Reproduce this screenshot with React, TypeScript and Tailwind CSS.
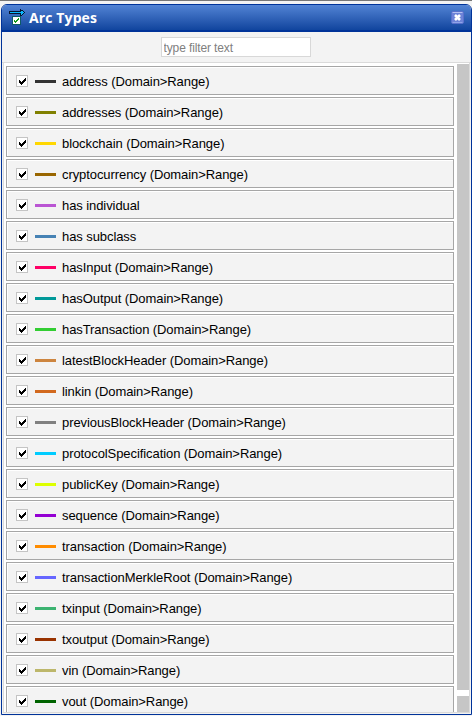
type ArcType = { name: string; color: string; relation: boolean };

const arcs: ArcType[] = [
  { name: 'address', color: '#333333', relation: true },
  { name: 'addresses', color: '#808000', relation: true },
  { name: 'blockchain', color: '#ffd700', relation: true },
  { name: 'cryptocurrency', color: '#996600', relation: true },
  { name: 'has individual', color: '#ba55d3', relation: false },
  { name: 'has subclass', color: '#4682b4', relation: false },
  { name: 'hasInput', color: '#ff0066', relation: true },
  { name: 'hasOutput', color: '#009999', relation: true },
  { name: 'hasTransaction', color: '#32cd32', relation: true },
  { name: 'latestBlockHeader', color: '#cd853f', relation: true },
  { name: 'linkin', color: '#d2691e', relation: true },
  { name: 'previousBlockHeader', color: '#808080', relation: true },
  { name: 'protocolSpecification', color: '#00ccff', relation: true },
  { name: 'publicKey', color: '#ddff00', relation: true },
  { name: 'sequence', color: '#9400d3', relation: true },
  { name: 'transaction', color: '#ff8c00', relation: true },
  { name: 'transactionMerkleRoot', color: '#6666ff', relation: true },
  { name: 'txinput', color: '#3cb371', relation: true },
  { name: 'txoutput', color: '#993300', relation: true },
  { name: 'vin', color: '#bdb76b', relation: true },
  { name: 'vout', color: '#006400', relation: true },
];

function Tick() {
  return (
    <svg className="h-[7px] w-[7px]" viewBox="0 0 7 7" shapeRendering="crispEdges" fill="#000">
      <path d="M0 2h1v3H0zM1 3h1v3H1zM2 4h1v3H2zM3 3h1v3H3zM4 2h1v3H4zM5 1h1v3H5zM6 0h1v3H6z" />
    </svg>
  );
}

function ArcIcon() {
  return (
    <svg className="h-[17px] w-[18px] shrink-0" viewBox="0 0 18 17" shapeRendering="crispEdges">
      <path d="M0 2h12v1H0zM0 3h1v1H0zM0 4h12v1H0zM11 0h1v1h-1zM12 1h1v1h-1zM13 1h1v1h-1zM14 2h1v1h-1zM15 3h1v1h-1zM14 4h1v1h-1zM13 5h1v1h-1zM12 6h1v1h-1zM11 6h1v1h-1zM11 1h1v1h-1zM11 5h1v1h-1z" fill="#05142e" />
      <path d="M1 3h14v1H1zM12 2h2v1h-2zM12 4h2v1h-2zM12 5h1v1h-1z" fill="#08b8ff" />
      <path d="M3 7h9v9H3z" fill="#0c5a66" />
      <path d="M4 8h7v7H4z" fill="#fff" />
      <path d="M5 11h1v2H5zM6 12h1v2H6zM7 11h1v2H7zM8 10h1v2H8zM9 9h1v2H9z" fill="#159a18" />
    </svg>
  );
}

function CloseIcon() {
  return (
    <svg className="h-[13px] w-[13px]" viewBox="0 0 13 13">
      <rect x=".5" y=".5" width="12" height="12" rx="1.5" fill="#6d83d8" stroke="#5a71cc" />
      <path d="M1.5 1.5h10" stroke="#b5c0f0" />
      <path d="M1.5 11.5h10" stroke="#8fa4e8" />
      <path d="M4 4l5 5M9 4l-5 5" stroke="#fff" strokeWidth="2.6" />
    </svg>
  );
}

function ArcRow({ arc }: { arc: ArcType }) {
  return (
    <li className="flex h-[29px] shrink-0 items-start border border-[#a6a6a6] bg-[#f3f3f3] pl-[9px] shadow-[inset_1px_1px_0_#fff]">
      <span className="mt-2 flex h-3 w-3 items-center justify-center border border-[#c4c4c4] bg-white">
        <Tick />
      </span>
      <span className="mt-[13px] ml-[7px] h-[3px] w-[21px]" style={{ backgroundColor: arc.color }} />
      <span className="mt-[7px] ml-1.5 text-[13px] leading-4 tracking-[-0.08px] whitespace-pre">
        {arc.name + (arc.relation ? ' (Domain>Range)' : '')}
      </span>
    </li>
  );
}

export default function App() {
  return (
    <div className="h-[716px] w-[472px] overflow-hidden border-t border-[#777] bg-[#f3f3f3] pt-[3px] pl-px font-['Liberation_Sans',Arial,sans-serif] text-black">
      <section className="flex h-[711px] w-[471px] flex-col overflow-hidden rounded-t-[6px] border border-[#003399] bg-[#f3f3f3] pb-px">
        <header className="flex h-[27px] shrink-0 items-center border-b-2 border-[#003399] bg-linear-to-b from-[#5283d4] to-[#10459e] px-[7px]">
          <ArcIcon />
          <h1 className="ml-[2px] flex-1 font-['Open_Sans',sans-serif] text-sm leading-5 font-bold tracking-[0.12px] text-white">
            Arc Types
          </h1>
          <CloseIcon />
        </header>
        <div className="flex h-[31px] shrink-0 justify-center border-b border-[#dadada] pt-[5px] pr-[2px]">
          <input
            className="h-5 w-[150px] border border-[#d8d8d8] bg-white px-[2px] pt-px text-xs tracking-[-0.12px] placeholder:text-[#808080]"
            placeholder="type filter text"
          />
        </div>
        <div className="mx-px flex min-h-0 flex-1 border-x border-b border-[#dadada] bg-white">
          <ul className="ml-[2px] flex w-[448px] shrink-0 flex-col gap-[2px] overflow-hidden pt-[3px]">
            {arcs.map((arc) => (
              <ArcRow key={arc.name} arc={arc} />
            ))}
          </ul>
          <div className="ml-[3px] flex w-3 flex-col gap-1.5 pt-px">
            <div className="h-[626px] bg-[#c6c6c6]" />
            <div className="flex-1 bg-[#c6c6c6]" />
          </div>
        </div>
      </section>
    </div>
  );
}
